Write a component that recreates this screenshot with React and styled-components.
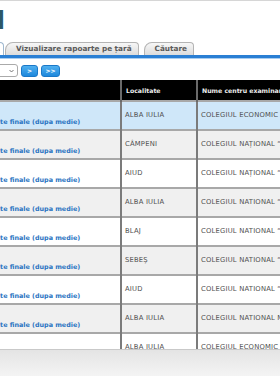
import React from "react";
import styled, { createGlobalStyle } from "styled-components";

const Global = createGlobalStyle`
  html, body { margin: 0; padding: 0; background: #fff; }
  body { overflow: hidden; font-family: "DejaVu Sans", Verdana, sans-serif; }
`;

const Viewport = styled.div`
  width: 280px;
  height: 376px;
  overflow: hidden;
  border-top: 1px solid #d6d6d6;
  box-sizing: border-box;
`;

const Page = styled.div`
  margin-left: -31px;
  width: 640px;
`;

const TitleBar = styled.div`
  width: 36px;
  height: 24px;
  margin-top: 8px;
  display: flex;
  justify-content: flex-end;
`;

const Title = styled.h1`
  margin: 0;
  flex-shrink: 0;
  white-space: nowrap;
  font-size: 24px;
  line-height: 24px;
  font-weight: bold;
  color: #2c5868;
`;

const TabStrip = styled.div`
  margin-top: 9px;
  display: flex;
  align-items: flex-end;
  gap: 5px;
  border-bottom: 3px solid #2a7fd4;
  box-shadow: 0 1px 0 #a8cdf0;
`;

const Tab = styled.div`
  height: 13px;
  box-sizing: border-box;
  padding: 0 6px 0 10px;
  ${(p) => (p.$w ? `width: ${p.$w}px; margin-right: -4px;` : "")}
  border: 1px solid ${(p) => (p.$active ? "#9fb8cf" : "#b4b4b4")};
  border-bottom: none;
  border-radius: 8px 4px 0 0;
  background: ${(p) =>
    p.$active ? "#ffffff" : "linear-gradient(#f7f7f7, #dcdcdc)"};
  font-size: 7.3px;
  line-height: 12px;
  font-weight: bold;
  color: #5a5a5a;
  white-space: nowrap;
  overflow: hidden;
`;

const Controls = styled.div`
  margin-top: 6px;
  display: flex;
  align-items: center;
  gap: 3px;
  padding-left: 4px;
  height: 13px;
`;

const Select = styled.div`
  width: 45px;
  height: 13px;
  box-sizing: border-box;
  border: 1px solid #aaa;
  border-radius: 3px;
  background: #fff;
  display: flex;
  align-items: center;
  justify-content: flex-end;
  padding-right: 3px;
`;

const NavButton = styled.button`
  width: ${(p) => p.$w}px;
  height: 12px;
  padding: 0;
  border: 1px solid #1a78c8;
  border-radius: 3px;
  background: linear-gradient(#4fb0f0, #1e88dc);
  color: #fff;
  font-family: "DejaVu Sans", sans-serif;
  font-size: 6px;
  font-weight: bold;
  line-height: 10px;
`;

const Table = styled.table`
  margin-top: 3px;
  border-collapse: collapse;
  table-layout: fixed;
  width: 560px;
`;

const HeadCell = styled.th`
  width: ${(p) => p.$w}px;
  height: 21px;
  padding: 0 4px;
  box-sizing: border-box;
  background: #000;
  color: #ececec;
  font-size: 6.2px;
  font-weight: bold;
  text-align: left;
  white-space: nowrap;
  overflow: hidden;
  border-right: 2px solid #6a6a6a;
`;

const Row = styled.tr`
  background: ${(p) =>
    p.$tone === "sel" ? "#cfe7f9" : p.$tone === "alt" ? "#f0f0f0" : "#ffffff"};
`;

const Cell = styled.td`
  height: 29px;
  box-sizing: border-box;
  padding: ${(p) => (p.$link ? "0 4px 3px 4px" : "0 3px 2px 3px")};
  vertical-align: ${(p) => (p.$link ? "bottom" : "middle")};
  border-top: 2px solid #a8a8a8;
  border-right: 2px solid #7b7b7b;
  font-size: 6.8px;
  letter-spacing: 0.2px;
  color: #505050;
  white-space: nowrap;
  overflow: hidden;
`;

const Link = styled.a`
  color: #2a74c2;
  font-weight: bold;
  font-size: 6.4px;
  letter-spacing: 0;
  text-decoration: none;
`;

const Footer = styled.div`
  position: fixed;
  left: 0;
  bottom: 0;
  width: 280px;
  height: 26px;
  border-top: 1px solid #c9c9c9;
  background: linear-gradient(#e4e4e4, #f4f4f4);
`;

const rows = [
  ["ALBA IULIA", "COLEGIUL ECONOMIC “DIONISIE POP MARȚIAN”"],
  ["CÂMPENI", "COLEGIUL NAȚIONAL “AVRAM IANCU”"],
  ["AIUD", "COLEGIUL NAȚIONAL “TITU MAIORESCU”"],
  ["ALBA IULIA", "COLEGIUL NATIONAL “HOREA, CLOŞCA ŞI CRIŞAN”"],
  ["BLAJ", "COLEGIUL NATIONAL “INOCHENTIE MICU CLAIN”"],
  ["SEBEŞ", "COLEGIUL NATIONAL “LUCIAN BLAGA”"],
  ["AIUD", "COLEGIUL NATIONAL “BETHLEN GABOR”"],
  ["ALBA IULIA", "COLEGIUL NATIONAL MILITAR “MIHAI VITEAZUL”"],
  ["ALBA IULIA", "COLEGIUL ECONOMIC “DIONISIE POP MARȚIAN”"],
];

export default function App() {
  return (
    <>
      <Global />
      <Viewport>
        <Page>
          <TitleBar>
            <Title>Bacalaureat național</Title>
          </TitleBar>
          <TabStrip>
            <Tab $active $w={35}>Listă</Tab>
            <Tab>Vizualizare rapoarte pe țară</Tab>
            <Tab>Căutare</Tab>
          </TabStrip>
          <Controls>
            <Select>
              <svg width="5" height="4" viewBox="0 0 5 4">
                <path d="M0.5 1 L2.5 3 L4.5 1" fill="none" stroke="#666" strokeWidth="0.9" />
              </svg>
            </Select>
            <NavButton $w={17}>&gt;</NavButton>
            <NavButton $w={19}>&gt;&gt;</NavButton>
          </Controls>
          <Table>
            <thead>
              <tr>
                <HeadCell $w={152}>Nr.</HeadCell>
                <HeadCell $w={76}>Localitate</HeadCell>
                <HeadCell $w={332}>Nume centru examinare</HeadCell>
              </tr>
            </thead>
            <tbody>
              {rows.map(([loc, name], i) => (
                <Row key={i} $tone={i === 0 ? "sel" : i % 2 ? "alt" : "plain"}>
                  <Cell $link>
                    <Link href="#">Rezultate finale (dupa medie)</Link>
                  </Cell>
                  <Cell>{loc}</Cell>
                  <Cell>{name}</Cell>
                </Row>
              ))}
            </tbody>
          </Table>
        </Page>
      </Viewport>
      <Footer />
    </>
  );
}
